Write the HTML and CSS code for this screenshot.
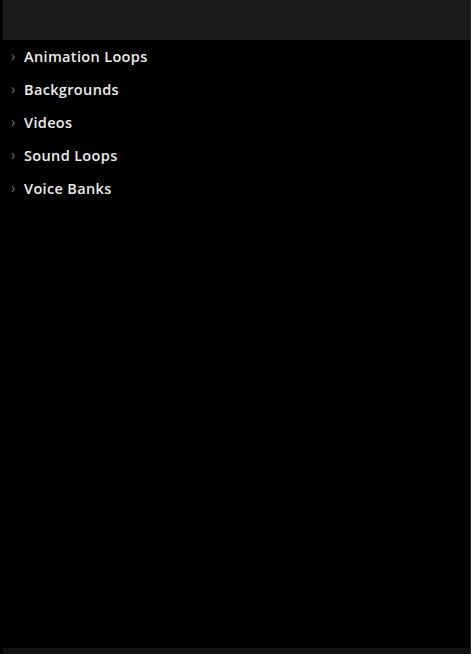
FILE: index.html
```html
<!DOCTYPE html>
<html>
<head>
<meta charset="utf-8">
<link rel="stylesheet" href="styles.css">
</head>
<body>
<div class="panel">
  <div class="header"></div>
  <ul class="menu">
    <li class="item"><span class="chev">›</span><span class="label">Animation Loops</span></li>
    <li class="item"><span class="chev">›</span><span class="label">Backgrounds</span></li>
    <li class="item"><span class="chev">›</span><span class="label">Videos</span></li>
    <li class="item"><span class="chev">›</span><span class="label">Sound Loops</span></li>
    <li class="item"><span class="chev">›</span><span class="label">Voice Banks</span></li>
  </ul>
  <div class="footer"></div>
</div>
</body>
</html>
```
FILE: styles.css
```css
html, body {
  margin: 0;
  padding: 0;
  background: #000;
  height: 100%;
}
body {
  font-family: "Open Sans", "Liberation Sans", sans-serif;
}
.panel {
  margin-left: 3px;
  width: 467px;
  height: 654px;
  display: flex;
  flex-direction: column;
  border-right: 1px solid #2a2a2a;
  box-sizing: content-box;
}
.header {
  height: 40px;
  background: #1b1b1b;
  flex: none;
}
.menu {
  list-style: none;
  margin: 0;
  padding: 0;
  flex: 1;
}
.item {
  height: 33px;
  display: flex;
  align-items: center;
}
.chev {
  width: 21px;
  padding-left: 8px;
  box-sizing: border-box;
  color: #777;
  font-size: 14px;
  font-weight: 400;
  line-height: 1;
  margin-top: -1px;
}
.label {
  color: #ececec;
  font-size: 14.5px;
  font-weight: 600;
  letter-spacing: 0.35px;
}
.footer {
  height: 6px;
  background: #111;
  flex: none;
}
```
